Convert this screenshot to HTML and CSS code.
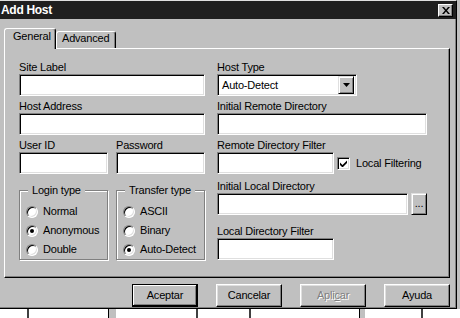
FILE: index.html
```html
<!DOCTYPE html>
<html lang="en">

<head>
    <meta charset="UTF-8">
    <title>Add Host</title>
    <link rel="stylesheet" href="styles.css">
</head>

<body>
    <div class="screen">
        <div class="window">
            <div class="titlebar">
                <span class="title">Add Host</span>
                <span class="close">
                    <svg width="8" height="7" viewBox="0 0 8 7">
                        <path d="M0 0H2L4 2.4L6 0H8L5 3.5L8 7H6L4 4.6L2 7H0L3 3.5Z" fill="#000" />
                    </svg>
                </span>
            </div>
            <div class="main">
                <div class="tabs">
                    <div class="tab active">General</div>
                    <div class="tab">Advanced</div>
                </div>
                <div class="panel">
                    <div class="col left">
                        <div class="field">
                            <span class="lbl">Site Label</span>
                            <span class="input sunken"></span>
                        </div>
                        <div class="field gap4">
                            <span class="lbl">Host Address</span>
                            <span class="input sunken"></span>
                        </div>
                        <div class="pair gap4">
                            <div class="field half">
                                <span class="lbl">User ID</span>
                                <span class="input sunken"></span>
                            </div>
                            <div class="field half">
                                <span class="lbl">Password</span>
                                <span class="input sunken"></span>
                            </div>
                        </div>
                        <div class="pair groups">
                            <div class="group">
                                <span class="legend">Login type</span>
                                <div class="opts">
                                    <div class="opt"><span class="radio"></span>Normal</div>
                                    <div class="opt"><span class="radio on"></span>Anonymous</div>
                                    <div class="opt"><span class="radio"></span>Double</div>
                                </div>
                            </div>
                            <div class="group">
                                <span class="legend">Transfer type</span>
                                <div class="opts">
                                    <div class="opt"><span class="radio"></span>ASCII</div>
                                    <div class="opt"><span class="radio"></span>Binary</div>
                                    <div class="opt"><span class="radio on"></span>Auto-Detect</div>
                                </div>
                            </div>
                        </div>
                    </div>
                    <div class="col right">
                        <div class="field">
                            <span class="lbl">Host Type</span>
                            <div class="select sunken">
                                <span class="value">Auto-Detect</span>
                                <span class="drop raised">
                                    <svg width="7" height="4" viewBox="0 0 7 4">
                                        <path d="M0 0H7L3.5 4Z" fill="#000" />
                                    </svg>
                                </span>
                            </div>
                        </div>
                        <div class="field gap4">
                            <span class="lbl">Initial Remote Directory</span>
                            <span class="input sunken"></span>
                        </div>
                        <div class="field gap4">
                            <span class="lbl">Remote Directory Filter</span>
                            <div class="row">
                                <span class="input short sunken"></span>
                                <span class="check sunken">
                                    <svg width="7" height="7" viewBox="0 0 7 7">
                                        <path d="M0 2.5L2.5 5L7 0.5V3L2.5 7.5L0 5Z" fill="#000" />
                                    </svg>
                                </span>
                                <span class="check-label">Local Filtering</span>
                            </div>
                        </div>
                        <div class="field gap6">
                            <span class="lbl">Initial Local Directory</span>
                            <div class="row">
                                <span class="input local sunken"></span>
                                <span class="browse raised">...</span>
                            </div>
                        </div>
                        <div class="field gap10">
                            <span class="lbl">Local Directory Filter</span>
                            <span class="input short sunken"></span>
                        </div>
                    </div>
                </div>
                <div class="buttons">
                    <span class="btn default">Aceptar</span>
                    <span class="btn">Cancelar</span>
                    <span class="btn disabled">Apli<u>c</u>ar</span>
                    <span class="btn">Ayuda</span>
                </div>
            </div>
        </div>
        <div class="side"></div>
    </div>
    <div class="under">
        <span class="mark m1"></span>
        <span class="mark m2"></span>
        <span class="mark m3"></span>
        <span class="mark m4"></span>
        <span class="mark m5"></span>
        <span class="mark m6"></span>
    </div>
</body>

</html>
```

FILE: styles.css
```css
* {
    margin: 0;
    padding: 0;
    box-sizing: border-box;
}

body {
    width: 460px;
    height: 318px;
    overflow: hidden;
    background-color: #c0c0c0;
    color: #000;
    font-family: "Liberation Sans", Arial, sans-serif;
    font-size: 11px;
    line-height: 13px;
    letter-spacing: -0.2px;
}

.screen {
    display: flex;
    height: 309px;
}

.window {
    width: 457px;
    height: 309px;
    background-color: #c0c0c0;
    border-top: 1px solid #dfdfdf;
    border-right: 1px solid #000;
    border-bottom: 1px solid #000;
    box-shadow: inset -1px -1px #808080;
}

.side {
    flex: 1;
}

/* title bar */
.titlebar {
    display: flex;
    align-items: center;
    justify-content: space-between;
    height: 18px;
    padding: 0 3px 0 1px;
    background-color: #1f1f1f;
    color: #fff;
    font-size: 12px;
    font-weight: bold;
    letter-spacing: -0.3px;
}

.close {
    display: flex;
    align-items: center;
    justify-content: center;
    width: 15px;
    height: 13px;
    background-color: #c0c0c0;
    border: 1px solid;
    border-color: #fff #000 #000 #fff;
    box-shadow: inset -1px -1px #808080;
}

.main {
    padding: 9px 0 0 4px;
}

/* tabs */
.tabs {
    display: flex;
    align-items: flex-end;
    height: 20px;
}

.tab {
    position: relative;
    width: 60px;
    height: 17px;
    padding-left: 5px;
    border: 1px solid;
    border-bottom: none;
    border-color: #fff #000 #000 #fff;
    border-radius: 3px 3px 0 0;
    box-shadow: inset -1px 0 #808080;
    background-color: #c0c0c0;
}

.tab.active {
    z-index: 1;
    width: 52px;
    height: 21px;
    margin-bottom: -1px;
    padding: 1px 0 0 8px;
}

.panel {
    display: flex;
    width: 446px;
    height: 230px;
    padding: 12px 0 0 14px;
    border: 1px solid;
    border-color: #fff #000 #000 #fff;
    box-shadow: inset -1px -1px #808080;
}

.col.left {
    width: 186px;
    margin-right: 12px;
}

.col.right {
    width: 210px;
}

.field {
    display: flex;
    flex-direction: column;
}

.lbl {
    display: block;
    height: 13px;
    white-space: nowrap;
}

.gap4 {
    margin-top: 4px;
}

.gap6 {
    margin-top: 6px;
}

.gap10 {
    margin-top: 10px;
}

/* sunken / raised borders */
.sunken {
    background-color: #fff;
    border: 1px solid;
    border-color: #808080 #fff #fff #808080;
    box-shadow: inset 1px 1px #000, inset -1px -1px #dfdfdf;
}

.raised {
    background-color: #c0c0c0;
    border: 1px solid;
    border-color: #dfdfdf #000 #000 #dfdfdf;
    box-shadow: inset 1px 1px #fff, inset -1px -1px #808080;
}

.input {
    display: block;
    height: 22px;
}

.input.short {
    width: 117px;
}

.input.local {
    width: 192px;
}

.pair {
    display: flex;
    gap: 8px;
}

.half {
    width: 89px;
}

/* group boxes */
.groups {
    margin-top: 16px;
}

.group {
    width: 89px;
    height: 70px;
    border: 1px solid #808080;
    box-shadow: inset 1px 1px #fff, 1px 1px #fff;
}

.legend {
    display: table;
    margin: -7px 0 0 8px;
    padding: 0 4px;
    background-color: #c0c0c0;
}

.opts {
    padding: 5px 0 0 6px;
}

.opt {
    display: flex;
    align-items: center;
    height: 19px;
    white-space: nowrap;
}

.radio {
    position: relative;
    width: 12px;
    height: 12px;
    margin-right: 5px;
    border-radius: 50%;
    background-color: #fff;
    border: 1px solid;
    border-color: #808080 #fff #fff #808080;
    box-shadow: inset 1px 1px #000, inset -1px -1px #dfdfdf;
}

.radio.on::after {
    content: "";
    position: absolute;
    left: 3px;
    top: 3px;
    width: 4px;
    height: 4px;
    border-radius: 50%;
    background-color: #000;
}

/* right column widgets */
.select {
    display: flex;
    align-items: center;
    width: 140px;
    height: 22px;
    padding: 2px;
}

.select .value {
    flex: 1;
    padding-left: 2px;
}

.drop {
    display: flex;
    align-items: center;
    justify-content: center;
    width: 16px;
    height: 18px;
}

.row {
    display: flex;
    align-items: center;
}

.check {
    display: flex;
    align-items: center;
    justify-content: center;
    width: 13px;
    height: 13px;
    margin-left: 3px;
}

.check-label {
    margin-left: 6px;
    white-space: nowrap;
}

.browse {
    display: flex;
    align-items: flex-end;
    justify-content: center;
    width: 16px;
    height: 22px;
    margin-left: 3px;
    padding-bottom: 4px;
}

/* dialog buttons */
.buttons {
    display: flex;
    justify-content: flex-end;
    gap: 18px;
    margin-top: 6px;
    padding-right: 6px;
}

.btn {
    display: flex;
    align-items: center;
    justify-content: center;
    width: 66px;
    height: 23px;
    border: 1px solid;
    border-color: #fff #000 #000 #fff;
    box-shadow: inset -1px -1px #808080, inset 1px 1px #dfdfdf;
}

.btn.default {
    border-color: #000;
    box-shadow: inset -1px -1px #000, inset 1px 1px #fff, inset -2px -2px #808080;
}

.btn.disabled {
    color: #808080;
    text-shadow: 1px 1px #fff;
}

/* strip of the window behind */
.under {
    display: flex;
    height: 9px;
    background-color: #fff;
}

.mark {
    width: 2px;
    height: 9px;
    background-color: #404040;
}

.m1 {
    margin-left: 27px;
}

.m2 {
    width: 8px;
    margin-left: 79px;
    background-color: #c0c0c0;
    border-left: 1px solid #000;
}

.m3 {
    margin-left: 80px;
}

.m4 {
    margin-left: 51px;
}

.m5 {
    width: 6px;
    margin-left: 108px;
    background-color: #c0c0c0;
    border-left: 1px solid #000;
}

.m6 {
    margin-left: 56px;
}
```
